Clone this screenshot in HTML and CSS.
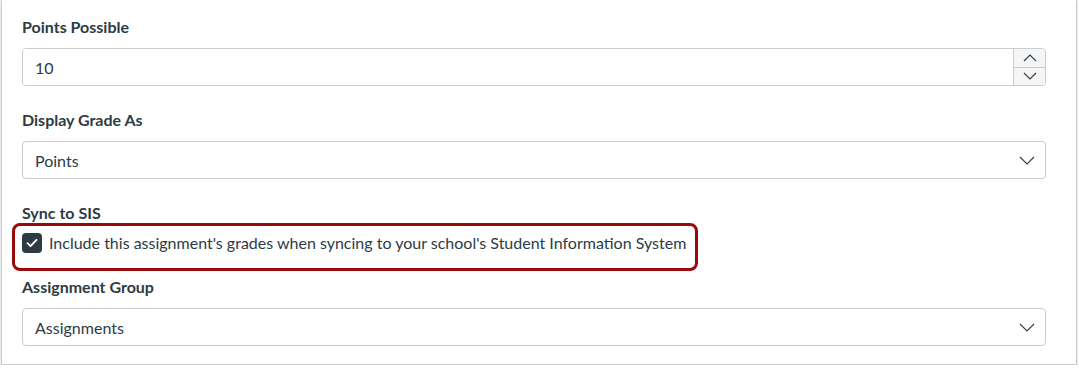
FILE: index.html
```html
<!DOCTYPE html>
<html lang="en">
<head>
    <meta charset="UTF-8">
    <title>Assignment Settings</title>
    <link rel="stylesheet" href="styles.css">
</head>
<body>
    <div class="panel">
        <div class="field">
            <label class="field-label" for="points">Points Possible</label>
            <div class="number-input">
                <input id="points" type="text" value="10">
                <div class="spinner">
                    <button class="spin-btn" type="button" aria-label="Increase">
                        <svg width="14" height="8" viewBox="0 0 14 8"><path d="M1 7L7 1l6 6" fill="none" stroke="#2d3b45" stroke-width="1.1"/></svg>
                    </button>
                    <button class="spin-btn" type="button" aria-label="Decrease">
                        <svg width="14" height="8" viewBox="0 0 14 8"><path d="M1 1l6 6 6-6" fill="none" stroke="#2d3b45" stroke-width="1.1"/></svg>
                    </button>
                </div>
            </div>
        </div>

        <div class="field">
            <label class="field-label">Display Grade As</label>
            <div class="select">
                <span>Points</span>
                <svg class="chevron" width="16" height="9" viewBox="0 0 16 9"><path d="M1 1l7 7 7-7" fill="none" stroke="#2d3b45" stroke-width="1.1"/></svg>
            </div>
        </div>

        <div class="field">
            <div class="field-label tight">Sync to SIS</div>
            <label class="check-row">
                <span class="checkbox">
                    <svg width="12" height="10" viewBox="0 0 12 10"><path d="M1.5 5.2l3 3L10.5 1.8" fill="none" stroke="#fff" stroke-width="1.8" stroke-linecap="round" stroke-linejoin="round"/></svg>
                </span>
                <span>Include this assignment's grades when syncing to your school's Student Information System</span>
                <span class="highlight"></span>
            </label>
        </div>

        <div class="field last">
            <label class="field-label">Assignment Group</label>
            <div class="select">
                <span>Assignments</span>
                <svg class="chevron" width="16" height="9" viewBox="0 0 16 9"><path d="M1 1l7 7 7-7" fill="none" stroke="#2d3b45" stroke-width="1.1"/></svg>
            </div>
        </div>
    </div>
</body>
</html>
```

FILE: styles.css
```css
body {
    margin: 0;
    background: #fff;
    font-family: Lato, "Liberation Sans", sans-serif;
    color: #2d3b45;
}
.panel {
    box-sizing: border-box;
    width: 1076px;
    margin-left: 1px;
    padding: 15px 30px 18px 20px;
    border: 1px solid #c7cdd1;
    border-top: none;
    box-shadow: 0 1px 2px rgba(0, 0, 0, 0.25);
}
.field {
    margin-bottom: 22px;
}
.field.last {
    margin-bottom: 0;
}
.field-label {
    display: block;
    font-size: 16px;
    font-weight: bold;
    line-height: 24px;
    margin-bottom: 9px;
}
.field-label.tight {
    margin-bottom: 0;
}
.number-input {
    display: flex;
    height: 38px;
    box-sizing: border-box;
    border: 1px solid #c7cdd1;
    border-radius: 4px;
    overflow: hidden;
}
.number-input input {
    flex: 1;
    border: none;
    outline: none;
    padding: 0 12px;
    font-family: inherit;
    font-size: 16px;
    color: #2d3b45;
    background: #fff;
}
.spinner {
    width: 31px;
    display: flex;
    flex-direction: column;
    border-left: 1px solid #c7cdd1;
    background: #f5f5f5;
}
.spin-btn {
    flex: 1;
    display: flex;
    align-items: center;
    justify-content: center;
    padding: 0;
    border: none;
    background: transparent;
}
.spin-btn + .spin-btn {
    border-top: 1px solid #c7cdd1;
}
.select {
    display: flex;
    align-items: center;
    justify-content: space-between;
    height: 38px;
    box-sizing: border-box;
    padding: 0 10px 0 12px;
    border: 1px solid #c7cdd1;
    border-radius: 4px;
    font-size: 16px;
}
.check-row {
    position: relative;
    display: flex;
    align-items: center;
    gap: 7px;
    padding-top: 8px;
    font-size: 16px;
    line-height: 20px;
}
.checkbox {
    display: flex;
    align-items: center;
    justify-content: center;
    width: 20px;
    height: 20px;
    border-radius: 4px;
    background: #2d3b45;
}
/* annotation box drawn over the row */
.highlight {
    position: absolute;
    left: -10px;
    top: -2px;
    width: 686px;
    height: 48px;
    box-sizing: border-box;
    border: 3px solid #9a0a0a;
    border-radius: 8px;
}
```
